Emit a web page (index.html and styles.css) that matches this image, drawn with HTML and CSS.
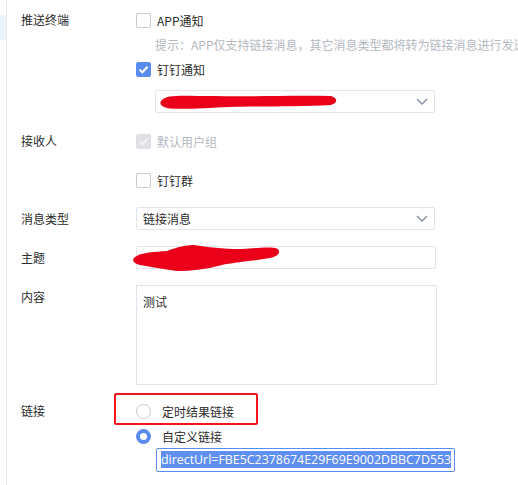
FILE: index.html
```html
<!DOCTYPE html>
<html lang="zh-CN">
<head>
  <meta charset="UTF-8">
  <meta name="viewport" content="width=device-width, initial-scale=1.0">
  <title>消息推送设置</title>
  <link rel="stylesheet" href="styles.css">
</head>
<body>
  <div class="page">
    <aside class="side">
      <div class="side-active"></div>
    </aside>
    <main class="form">

      <div class="form-item">
        <div class="label">推送终端</div>
        <div class="controls">
          <div class="line"><span class="check"></span><span>APP通知</span></div>
          <div class="line hint">提示：APP仅支持链接消息，其它消息类型都将转为链接消息进行发送</div>
          <div class="line line-gap"><span class="check on"><svg viewBox="0 0 15 15"><path d="M3.5 7.6 L6.3 10.3 L11.6 4.8" /></svg></span><span>钉钉通知</span></div>
          <div class="select indent">
            <svg class="scribble" width="180" height="18" viewBox="0 0 180 18"><path d="M3 7 C 8 1, 25 3, 55 3 C 90 4, 130 2, 172 3 C 179 5, 179 10, 172 12 C 140 14, 100 13, 70 14 C 45 15, 20 17, 8 15 C 1 13, 0 10, 3 7 Z" /></svg>
            <svg class="chevron" width="12" height="8" viewBox="0 0 12 8"><path d="M1 1 L6 6 L11 1" /></svg>
          </div>
        </div>
      </div>

      <div class="form-item gap-18">
        <div class="label">接收人</div>
        <div class="controls">
          <div class="line muted"><span class="check disabled"><svg viewBox="0 0 15 15"><path d="M3.5 7.6 L6.3 10.3 L11.6 4.8" /></svg></span><span>默认用户组</span></div>
          <div class="line line-gap-19"><span class="check"></span><span>钉钉群</span></div>
        </div>
      </div>

      <div class="form-item gap-17">
        <div class="label tall">消息类型</div>
        <div class="controls">
          <div class="select">
            <span class="value">链接消息</span>
            <svg class="chevron" width="12" height="8" viewBox="0 0 12 8"><path d="M1 1 L6 6 L11 1" /></svg>
          </div>
        </div>
      </div>

      <div class="form-item gap-16">
        <div class="label tall">主题</div>
        <div class="controls">
          <div class="input">
            <svg class="blot" width="150" height="28" viewBox="0 0 150 28"><path d="M2 14 C 6 9, 20 8, 35 7 C 45 3, 55 1, 62 1 C 75 3, 90 5, 110 5 C 125 4, 140 2, 146 5 C 149 9, 146 12, 138 14 C 120 17, 100 19, 90 21 C 75 25, 60 27, 45 27 C 30 25, 20 23, 8 21 C 1 19, 0 16, 2 14 Z" /></svg>
          </div>
        </div>
      </div>

      <div class="form-item gap-16">
        <div class="label tall">内容</div>
        <div class="controls">
          <div class="textarea">测试</div>
        </div>
      </div>

      <div class="form-item gap-16">
        <div class="label">链接</div>
        <div class="controls">
          <div class="line mark-wrap">
            <span class="mark"></span>
            <span class="radio"></span><span class="radio-text">定时结果链接</span>
          </div>
          <div class="line line-gap-5"><span class="radio on"></span><span class="radio-text">自定义链接</span></div>
          <div class="url"><span class="selected">directUrl=FBE5C2378674E29F69E9002DBBC7D553</span></div>
        </div>
      </div>

    </main>
  </div>
</body>
</html>
```
FILE: styles.css
```css
body {
  margin: 0;
  background: #fff;
  font-family: "Noto Sans CJK SC", "Liberation Sans", sans-serif;
  font-size: 12px;
  color: #515a6e;
  overflow: hidden;
}
.page {
  display: flex;
  min-height: 485px;
}
.side {
  width: 6px;
  border-right: 1px solid #e8eaec;
  flex-shrink: 0;
}
.side-active {
  margin-top: 15px;
  height: 25px;
  background: #edf3fd;
}
.form {
  flex: 1;
  padding: 10px 0 0 14px;
  white-space: nowrap;
}
.form-item {
  display: flex;
  align-items: flex-start;
}
.gap-16 { margin-top: 16px; }
.gap-17 { margin-top: 17px; }
.gap-18 { margin-top: 18px; }
.label {
  width: 115px;
  flex-shrink: 0;
  line-height: 20px;
  color: #2b2b2b;
}
.label.tall {
  line-height: 23px;
}
.controls {
  flex: 1;
}
.line {
  display: flex;
  align-items: center;
  height: 20px;
  gap: 6px;
  color: #2b2b2b;
}
.line-gap { margin-top: 5px; }
.line-gap-19 { margin-top: 19px; }
.line-gap-5 { margin-top: 5px; }
.hint {
  margin-top: 4px;
  padding-left: 19px;
  color: #b4b8c0;
}
.line.muted { color: #b4b8c0; }
.check {
  width: 15px;
  height: 15px;
  box-sizing: border-box;
  border: 1px solid #c6c9cf;
  border-radius: 2px;
  background: #fff;
  display: inline-flex;
}
.check svg {
  width: 15px;
  height: 15px;
  margin: -1px;
}
.check path {
  fill: none;
  stroke: #fff;
  stroke-width: 2;
}
.check.on {
  background: #5a8cf0;
  border-color: #5a8cf0;
}
.check.disabled {
  background: #dfe1e5;
  border-color: #dfe1e5;
}
.check.disabled path {
  stroke: #f4f4f5;
}
.select,
.input {
  position: relative;
  width: 299px;
  height: 23px;
  box-sizing: border-box;
  border: 1px solid #e3e4e7;
  border-radius: 2px;
  display: flex;
  align-items: center;
  padding-left: 6px;
  color: #2b2b2b;
}
.select.indent {
  margin-top: 11px;
  margin-left: 19px;
  width: 280px;
}
.chevron {
  position: absolute;
  right: 6px;
  top: 7px;
}
.chevron path {
  fill: none;
  stroke: #7f8a9d;
  stroke-width: 1.3;
}
.scribble {
  position: absolute;
  left: 3px;
  top: 2px;
}
.scribble path,
.blot path {
  fill: #ea0019;
}
.input {
  width: 300px;
}
.blot {
  position: absolute;
  left: -5px;
  top: -3px;
}
.textarea {
  width: 301px;
  height: 100px;
  box-sizing: border-box;
  border: 1px solid #e3e4e7;
  padding: 4px 6px;
  line-height: 24px;
  color: #2b2b2b;
}
.mark-wrap {
  position: relative;
}
.mark {
  position: absolute;
  left: -22px;
  top: -8px;
  width: 144px;
  height: 32px;
  box-sizing: border-box;
  border: 2px solid #f5141b;
  border-radius: 2px;
}
.radio {
  width: 15px;
  height: 15px;
  box-sizing: border-box;
  border: 1px solid #c6c9cf;
  border-radius: 50%;
  background: #fff;
}
.radio.on {
  border: 4px solid #5a8cf0;
}
.radio-text {
  margin-left: 5px;
}
.url {
  margin-top: 2px;
  margin-left: 20px;
  width: 299px;
  height: 24px;
  box-sizing: border-box;
  border: 1px solid #5a8cf0;
  border-radius: 2px;
  padding: 2px 0 0 4px;
  font-family: "Open Sans", "Liberation Sans", sans-serif;
  font-size: 12.4px;
  line-height: 18px;
}
.selected {
  background: #5f8ff0;
  color: #fff;
}
```
